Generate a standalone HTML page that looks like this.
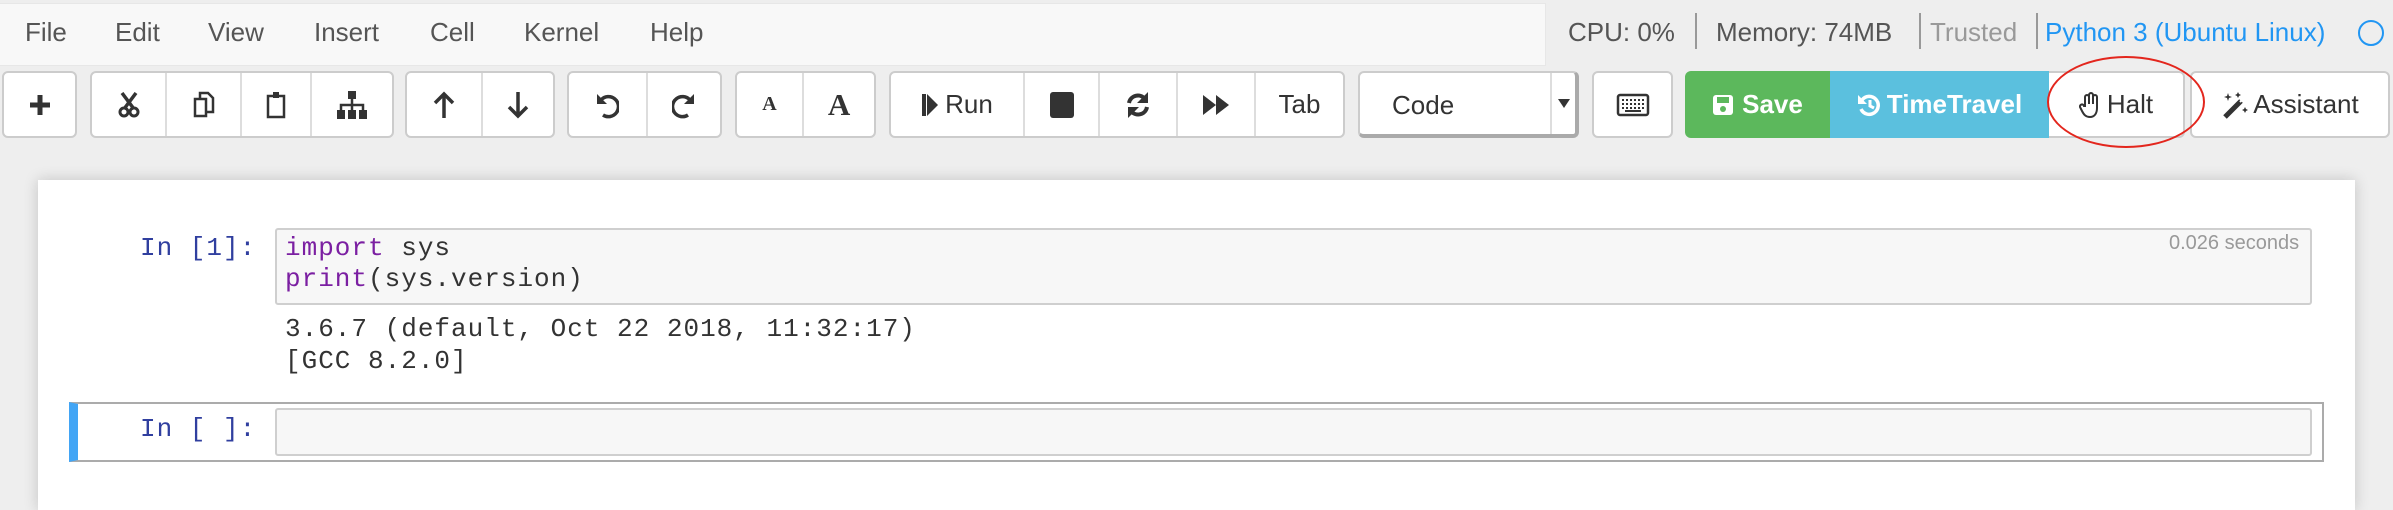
<!DOCTYPE html>
<html><head><meta charset="utf-8"><style>
*{box-sizing:border-box;margin:0;padding:0}
body{width:2393px;height:495px;background:#eee;position:relative;overflow:hidden;font-family:"Liberation Sans",sans-serif;color:#333}
.a{position:absolute}
#menubar{left:0;top:3px;width:1546px;height:63px;background:#f8f8f8;border:1px solid #e7e7e7;border-left:none}
.m{position:absolute;top:17px;font-size:26px;color:#555}
.st{position:absolute;top:17px;font-size:26px;color:#555;white-space:nowrap}
.sep{position:absolute;top:13px;width:2px;height:36px;background:#999}
.g{position:absolute;top:71px;height:67px;background:#fff;border:2px solid #ccc;border-radius:6px;display:flex}
.g>div{height:100%;border-left:2px solid #ddd;display:flex;align-items:center;justify-content:center;font-size:26px;color:#333}
.g>div:first-child{border-left:none}
svg{display:block}
#page{left:38px;top:180px;width:2317px;height:330px;background:#fff;box-shadow:0 0 14px rgba(0,0,0,.18)}
.mono{font-family:"Liberation Mono",monospace;font-size:26px;letter-spacing:1px;line-height:31px;white-space:pre}
.prompt{color:#303f9f}
.inp{position:absolute;background:#f7f7f7;border:2px solid #cfcfcf;border-radius:3px}
.kw{color:#7b1fa2}
</style></head><body>
<div class="a" id="menubar"></div>
<span class="m" style="left:25px">File</span>
<span class="m" style="left:115px">Edit</span>
<span class="m" style="left:208px">View</span>
<span class="m" style="left:314px">Insert</span>
<span class="m" style="left:430px">Cell</span>
<span class="m" style="left:524px">Kernel</span>
<span class="m" style="left:650px">Help</span>

<span class="st" style="left:1568px">CPU: 0%</span>
<div class="sep" style="left:1695px"></div>
<span class="st" style="left:1716px">Memory: 74MB</span>
<div class="sep" style="left:1919px"></div>
<span class="st" style="left:1930px;color:#999">Trusted</span>
<div class="sep" style="left:2036px"></div>
<span class="st" style="left:2045px;color:#2196f3">Python 3 (Ubuntu Linux)</span>
<div class="a" style="left:2358px;top:20px;width:26px;height:26px;border:2.5px solid #2196f3;border-radius:50%"></div>

<div class="g" style="left:2px;width:75px"><div style="width:100%"><svg width="24" height="24" viewBox="0 0 24 24"><path d="M12 2v20M2 12h20" stroke="#333" stroke-width="5"/></svg></div></div>
<div class="g" style="left:90px;width:304px">
<div style="width:73px"><svg width="22" height="26" viewBox="0 0 22 26"><circle cx="6" cy="20" r="4" fill="none" stroke="#333" stroke-width="3"/><circle cx="16" cy="20" r="4" fill="none" stroke="#333" stroke-width="3"/><path d="M4 1l12 16M18 1L6 17" stroke="#333" stroke-width="3.5"/></svg></div>
<div style="width:75px"><svg width="22" height="28" viewBox="0 0 22 28"><rect x="2" y="8" width="11" height="17" fill="#fff" stroke="#333" stroke-width="2.5"/><path d="M7 8V2h8l5 5v14h-7" fill="none" stroke="#333" stroke-width="2.5"/></svg></div>
<div style="width:70px"><svg width="20" height="28" viewBox="0 0 20 28"><rect x="2" y="5" width="16" height="21" fill="none" stroke="#333" stroke-width="2.5"/><rect x="7" y="1" width="6" height="6" fill="#333"/></svg></div>
<div style="width:82px"><svg width="32" height="30" viewBox="0 0 32 30"><rect x="12" y="1" width="8" height="8" fill="#333"/><path d="M16 9v6M5 20v-5h22v5M16 15v5" stroke="#333" stroke-width="2.5" fill="none"/><rect x="1" y="20" width="8" height="9" fill="#333"/><rect x="12" y="20" width="8" height="9" fill="#333"/><rect x="23" y="20" width="8" height="9" fill="#333"/></svg></div>
</div>
<div class="g" style="left:405px;width:150px">
<div style="width:75px"><svg width="22" height="28" viewBox="0 0 22 28"><path d="M11 27V3M2 12l9-9 9 9" stroke="#333" stroke-width="3.5" fill="none"/></svg></div>
<div style="width:73px"><svg width="22" height="28" viewBox="0 0 22 28"><path d="M11 1v24M2 16l9 9 9-9" stroke="#333" stroke-width="3.5" fill="none"/></svg></div>
</div>
<div class="g" style="left:567px;width:155px">
<div style="width:78px"><svg width="24" height="28" viewBox="0 0 24 28"><path d="M6 9A10 10 0 1 1 8 24" stroke="#333" stroke-width="3.5" fill="none"/><path d="M2 3v10h10z" fill="#333"/></svg></div>
<div style="width:75px"><svg width="24" height="28" viewBox="0 0 24 28"><path d="M18 9A10 10 0 1 0 16 24" stroke="#333" stroke-width="3.5" fill="none"/><path d="M22 3v10H12z" fill="#333"/></svg></div>
</div>
<div class="g" style="left:735px;width:141px">
<div style="width:66px;font-family:'Liberation Serif',serif;font-weight:bold;font-size:20px">A</div>
<div style="width:73px;font-family:'Liberation Serif',serif;font-weight:bold;font-size:31px">A</div>
</div>
<div class="g" style="left:889px;width:456px">
<div style="width:132px"><svg width="18" height="24" viewBox="0 0 18 24"><path d="M1 1v22h4V1zM6 1v22l11-11z" fill="#333"/></svg><span style="margin-left:6px">Run</span></div>
<div style="width:75px"><div style="width:24px;height:26px;background:#333;border-radius:3px"></div></div>
<div style="width:78px"><svg width="26" height="30" viewBox="0 0 26 30"><path d="M4 13A9 9 0 0 1 20 9M22 17A9 9 0 0 1 6 21" stroke="#333" stroke-width="4" fill="none"/><path d="M23 2v11H12zM3 28V17h11z" fill="#333"/></svg></div>
<div style="width:78px"><svg width="28" height="22" viewBox="0 0 28 22"><path d="M1 1v20l13-10zM14 1v20l13-10z" fill="#333"/></svg></div>
<div style="flex:1">Tab</div>
</div>
<div class="g" style="left:1358px;width:221px;display:block;border-right:4px solid #aaa;border-bottom:4px solid #aaa">
<span class="a" style="left:32px;top:17px;font-size:26px">Code</span>
<div class="a" style="left:190px;top:0;width:2px;height:100%;background:#ccc"></div>
<div class="a" style="left:198px;top:26px;border-left:6px solid transparent;border-right:6px solid transparent;border-top:9px solid #333"></div>
</div>
<div class="g" style="left:1592px;width:81px"><div style="width:100%"><svg width="34" height="24" viewBox="0 0 34 24"><rect x="2" y="2" width="30" height="20" rx="2" fill="none" stroke="#333" stroke-width="2.5"/><path d="M6 7h22M6 11h22M6 15h22" stroke="#333" stroke-width="2" stroke-dasharray="2 2"/><path d="M9 18h16" stroke="#333" stroke-width="2"/></svg></div></div>

<div class="a" style="left:1685px;top:71px;width:145px;height:67px;background:#5cb85c;border-radius:6px 0 0 6px;color:#fff;font-size:26px;font-weight:bold;display:flex;align-items:center;justify-content:center"><svg width="22" height="22" viewBox="0 0 22 22"><rect x="1" y="1" width="20" height="20" rx="3" fill="#fff"/><rect x="5" y="3" width="12" height="6" fill="#5cb85c"/><circle cx="11" cy="15" r="3" fill="#5cb85c"/></svg><span style="margin-left:8px">Save</span></div>
<div class="a" style="left:1830px;top:71px;width:219px;height:67px;background:#5bc0de;color:#fff;font-size:26px;font-weight:bold;display:flex;align-items:center;justify-content:center"><svg width="24" height="24" viewBox="0 0 24 24"><path d="M5 7A9 9 0 1 1 4 16" stroke="#fff" stroke-width="3.5" fill="none"/><path d="M1 2v9h9z" fill="#fff"/><path d="M13 7v6l4 2" stroke="#fff" stroke-width="3" fill="none"/></svg><span style="margin-left:6px">TimeTravel</span></div>
<div class="a" style="left:2049px;top:71px;width:136px;height:67px;background:#fff;border:2px solid #ccc;border-left:none;border-radius:0 6px 6px 0;font-size:26px;display:flex;align-items:center;justify-content:center"><svg width="22" height="26" viewBox="0 0 22 26"><path d="M6 14V5a2 2 0 0 1 4 0v7V3a2 2 0 0 1 4 0v9V5a2 2 0 0 1 4 0v11c0 6-3 9-7 9s-6-2-8-6l-2-4a2 2 0 0 1 4-1z" fill="none" stroke="#333" stroke-width="2"/></svg><span style="margin-left:6px">Halt</span></div>
<div class="a" style="left:2190px;top:71px;width:200px;height:67px;background:#fff;border:2px solid #ccc;border-radius:6px;font-size:26px;display:flex;align-items:center;justify-content:center"><svg width="28" height="28" viewBox="0 0 28 28"><path d="M4 26L20 10" stroke="#333" stroke-width="5"/><path d="M19 11l4-4" stroke="#fff" stroke-width="2"/><path d="M7 2l1 3 3 1-3 1-1 3-1-3-3-1 3-1zM24 16l1 2 2 1-2 1-1 2-1-2-2-1 2-1zM17 1l1 2 2 1-2 1-1 2-1-2-2-1 2-1z" fill="#333"/></svg><span style="margin-left:4px">Assistant</span></div>
<div class="a" style="left:2047px;top:56px;width:158px;height:92px;border:2.5px solid #e3261d;border-radius:50%"></div>

<div class="a" id="page"></div>
<div class="a mono prompt" style="left:140px;top:233px">In [1]:</div>
<div class="inp" style="left:275px;top:228px;width:2037px;height:77px"></div>
<div class="a mono" style="left:285px;top:233px"><span class="kw">import</span> sys
<span class="kw">print</span>(sys.version)</div>
<div class="a" style="left:2169px;top:232px;font-size:20px;color:#999">0.026 seconds</div>
<div class="a mono" style="left:285px;top:313px;line-height:32px">3.6.7 (default, Oct 22 2018, 11:32:17)
[GCC 8.2.0]</div>
<div class="a" style="left:69px;top:402px;width:2255px;height:60px;border:2px solid #ababab;border-left:9px solid #42a5f5"></div>
<div class="a mono prompt" style="left:140px;top:414px">In [ ]:</div>
<div class="inp" style="left:275px;top:408px;width:2037px;height:48px"></div>
</body></html>
